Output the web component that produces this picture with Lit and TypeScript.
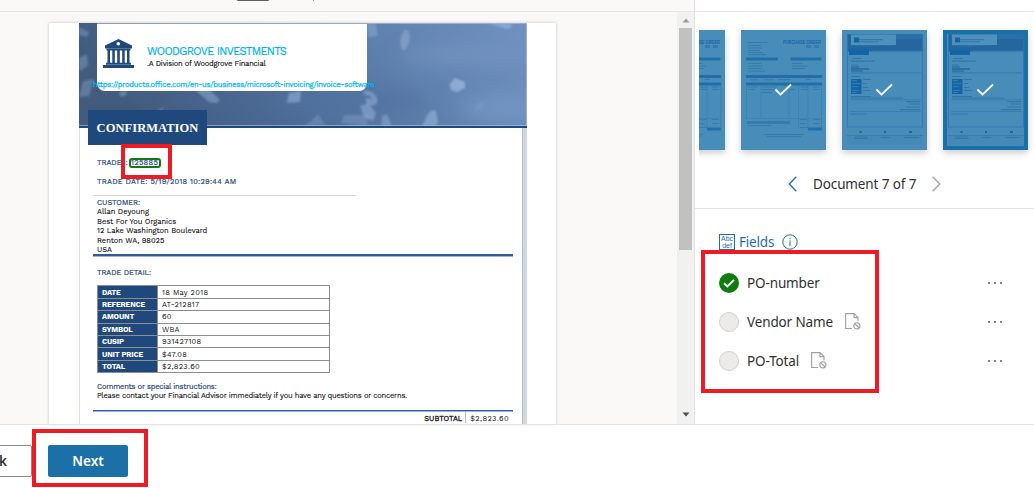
import { LitElement, html, svg, css } from "lit";
import { customElement, property } from "lit/decorators.js";

const bankIcon = html`<svg class="bank" width="31" height="29" viewBox="0 0 31 29">
  <g fill="#1f497d">
    <path d="M15.5 0 L29 6.6 V9.6 H2 V6.6 Z" />
    <path d="M3.5 9.6H27.5V11.4H3.5Z M4.5 11H7V24H4.5Z M9.3 11H11.8V24H9.3Z M14.2 11H16.8V24H14.2Z M19.2 11H21.7V24H19.2Z M24 11H26.5V24H24Z" />
    <path d="M3 23.7H28V25.8H3Z M0 26H31V29H0Z" />
  </g>
  <circle cx="15.3" cy="4.8" r="1.8" fill="#fff" />
</svg>`;

const bannerArt = html`<svg class="art" width="448" height="103" viewBox="0 0 448 103">
  <defs>
    <linearGradient id="bg" x1="0" y1="0.2" x2="1" y2="0">
      <stop offset="0" stop-color="#435c7e" /><stop offset="0.3" stop-color="#4b6a95" />
      <stop offset="0.65" stop-color="#5f81ae" /><stop offset="1" stop-color="#7092c0" />
    </linearGradient>
    <filter id="soft"><feGaussianBlur stdDeviation="0.8" /></filter>
    <filter id="haze" x="-50%" y="-50%" width="200%" height="200%"><feGaussianBlur stdDeviation="9" /></filter>
  </defs>
  <rect width="448" height="103" fill="url(#bg)" />
  <g filter="url(#haze)">
    <ellipse cx="390" cy="32" rx="70" ry="9" fill="#7898c4" opacity=".6" />
    <ellipse cx="430" cy="85" rx="50" ry="14" fill="#7b9cca" opacity=".6" />
    <ellipse cx="270" cy="78" rx="80" ry="14" fill="#4f719f" opacity=".6" />
  </g>
  <g filter="url(#soft)" fill="#8daad4">
    <path d="M0 4 10 9 8 14 0 12Z" opacity=".4" />
    <path d="M0 35 8 31 9 42 2 48 0 46Z" opacity=".4" />
    <path d="M4 58 15 56 10 73 0 74Z" opacity=".38" />
    <path d="M40 69 48 68 47 72 42 74Z" opacity=".5" />
    <path d="M117 68 130 66 141 77 138 80 130 79Z" opacity=".55" />
    <path d="M210 70 222 68 221 79 208 80Z" opacity=".65" />
    <path d="M78 89 84 84 83 91 77 93Z" opacity=".5" />
    <path d="M232 98 239 91 246 102 225 103Z" opacity=".35" />
    <path d="M285 68Q294 66 298 75 300 82 292 83 285 80 287 75L293 76Q290 71 285 72Z" opacity=".6" />
    <path d="M288 0H297L299 13 289 14Z" opacity=".5" />
    <ellipse cx="326" cy="17" rx="4.5" ry="10" transform="rotate(10 326 17)" opacity=".6" />
    <path d="M371 61 376 55 386 59V65L378 69 372 67Z" />
    <path d="M265 92 290 92 288 103 262 100Z" opacity=".35" />
    <path d="M281 83 289 80 297 90 294 98 285 94Z" opacity=".6" />
    <path d="M303 93 308 91 313 103H302Z" opacity=".55" />
    <path d="M348 93Q352 85 357 88L359 100 356 103H343Z" opacity=".75" />
    <path d="M409 0 432 0 433 4 428 6Z" opacity=".9" />
    <path d="M396 82 406 77 403 86 396 90Z" opacity=".2" />
  </g>
  <path d="M0 102.5H448M447.5 0V103M18 .5H448" stroke="#b9c8dd" stroke-width="1" opacity=".6" />
</svg>`;

const lines = (list: number[][], color: string, opacity: number) =>
  list.map(([x, y, w, h]) => svg`<rect x=${x} y=${y} width=${w} height=${h} fill=${color} opacity=${opacity} />`);

const orderArt = html`<svg width="85" height="120" viewBox="0 0 85 120">
  ${svg`${lines([[5, 27.5, 32, 3], [49.5, 27.5, 31, 3], [5, 45, 76, 3], [5, 52.5, 76, 3], [67, 97.5, 14, 3]], "#1465a3", 0.75)}
  ${lines([[6, 12, 21, 1], [7, 15, 13, 1], [7, 17.5, 14, 1], [7, 20, 12, 1], [7, 22, 15, 1], [7, 24, 18, 1.2], [7, 33, 13, 1], [7, 35.5, 15, 1], [7, 38, 14, 1], [7, 40.5, 17, 1], [51, 33, 11, 1], [51, 35.5, 15, 1], [51, 38, 13, 1], [65, 15, 5, 3], [73, 15, 5, 3], [9, 49.3, 8, 1], [23, 49.3, 10, 1], [37, 49, 13, 1.2], [65, 49, 5, 1], [7, 56.5, 10, 1], [7, 59, 7, 1], [21, 56.5, 15, 1], [21, 59, 12, 1], [21, 62, 10, 1], [49, 59, 5, 1], [60, 56.5, 7, 1], [60, 59, 7, 1], [72, 56.5, 7, 1], [72, 59, 7, 1], [6, 91, 43, 3], [7, 95, 23, 1], [59, 89, 7, 1], [59, 93, 6, 1], [59, 97, 8, 1], [72, 89, 7, 1], [72, 93, 7, 1], [23, 104, 40, 1], [26, 106, 34, 1]], "#175f95", 0.38)}`}
  <path d="M5.5 55V88.500H80.500V55M20 55V88M48 55V88M57.500 55V99M67 55V99M80.500 88V99" stroke="#3379ae" stroke-width=".5" fill="none" />
  <text x="42" y="14" class="order" textLength="38" lengthAdjust="spacingAndGlyphs">PURCHASE ORDER</text>
</svg>`;

const confirmArt = html`<svg width="85" height="120" viewBox="0 0 85 120">
  <rect x="5.500" y="4.500" width="75" height="92.500" fill="none" stroke="#2f7bb1" />
  <rect x="5.500" y="4" width="75.500" height="17.500" fill="#2a6fa6" />
  <path d="M6 5H9V16H12L30 17V21H6Z M30 16H48L55 9H80V20H30Z" fill="#1d5e94" opacity=".5" />
  <rect x="9" y="4.500" width="45" height="10.500" fill="#4e91bd" />
  <rect x="12" y="7.500" width="5" height="5" fill="#1762a1" />
  <rect x="7" y="19" width="20" height="6" fill="#1465a5" />
  <rect x="9" y="49" width="10.500" height="15" fill="#1465a3" />
  ${svg`${lines([[17, 9, 24, 1.2], [17, 11.300, 20, 1], [9, 22, 16, 1], [10, 28, 10, 1], [9, 30.500, 24, 1.2], [9, 34.500, 7, 1], [9, 42.500, 70, 0.8], [9, 46, 9, 1], [9, 66, 20, 1], [9, 67.500, 52, 1], [64, 71, 14, 1.200], [67, 73.500, 11, 1], [64, 76.500, 14, 1], [58, 79, 20, 1.200], [8, 83.500, 17, 1], [8, 69.500, 71, 0.6], [8, 81, 71, 0.6], [21, 49, 8, 1], [21, 53, 4, 1], [21, 57, 5, 1], [21, 60, 8, 1], [5, 105, 76, 0.7], [12, 106.500, 13, 1], [12, 108, 14, 1], [39, 107, 9, 1], [62, 107, 15, 1]], "#175f95", 0.5)}
  ${lines([[9, 36.500, 8, 1], [9, 38.300, 18, 1.300], [9, 40.500, 12, 1], [17.500, 101, 2, 2], [42, 101, 2, 2], [67, 101, 3, 2]], "#0d4f82", 0.65)}
  ${lines([[10, 50.500, 5, 0.6], [10, 53.500, 8, 0.6], [10, 56.500, 6, 0.6], [10, 60, 7, 0.6], [10, 62, 5, 0.6]], "#5a9bc7", 0.8)}`}
  <rect x="5.500" y="105" width="75.500" height="10" fill="#377fb4" opacity=".25" />
</svg>`;

@customElement("doc-thumb")
export class DocThumb extends LitElement {
  @property() kind = "order";
  @property({ type: Boolean, reflect: true }) selected = false;

  static styles = css`
    :host { display: grid; flex: none; width: 85px; height: 120px; background: #488dba; box-shadow: 0 3px 7px rgba(0, 0, 0, 0.2); overflow: hidden; }
    svg { grid-area: 1 / 1; display: block; }
    .check { place-self: center; }
    .frame { grid-area: 1 / 1; box-sizing: border-box; z-index: 1; }
    :host([selected]) .frame { border: 4px solid #1b70a8; }
    .order { font: bold 4.500px "Liberation Sans", sans-serif; fill: #1465a3; }
  `;

  render() {
    return html`${this.kind === "order" ? orderArt : confirmArt}
      <svg class="check" width="19" height="14" viewBox="0 0 19 14"><path d="M1.500 6.500 6.500 11.600 17 1.500" fill="none" stroke="#fff" stroke-width="1.800" /></svg>
      <div class="frame"></div>`;
  }
}

@customElement("field-row")
export class FieldRow extends LitElement {
  @property() state = "found";

  static styles = css`
    :host { display: flex; align-items: center; height: 39px; font-size: 13.500px; letter-spacing: -0.130px; color: #323130; }
    .mark { flex: none; box-sizing: border-box; width: 20px; height: 20px; border-radius: 50%; background: #edebe9; border: 1.500px solid #d2d0ce; }
    .found { background: #107c10; border: 0; }
    .mark svg { display: block; }
    .label { margin-left: 8px; white-space: pre; }
    .missing { margin-left: 12px; }
    .more { margin-left: auto; }
  `;

  render() {
    const found = this.state === "found";
    return html`<div class="mark ${found ? "found" : ""}">
        ${found ? html`<svg width="20" height="20" viewBox="0 0 20 20"><path d="M5 10.200 8.400 13.500 15 6.900" fill="none" stroke="#fff" stroke-width="1.900" /></svg>` : ""}
      </div>
      <span class="label"><slot></slot></span>
      ${found ? "" : html`<svg class="missing" width="16" height="17" viewBox="0 0 16 17" fill="none" stroke="#a19f9d" stroke-width="1.100">
        <path d="M7 15.500H.6V.6H9L13 4.600V8.500M9 .6V4.600H13" /><circle cx="11.900" cy="12.800" r="3.100" /><path d="M9.700 10.600 14.100 15" />
      </svg>`}
      <svg class="more" width="16" height="4" viewBox="0 0 16 4" fill="#7c8592"><path d="M1 1H3V3H1Z M7 1H9V3H7Z M13 1H15V3H13Z" /></svg>`;
  }
}

@customElement("trade-document")
export class TradeDocument extends LitElement {
  static styles = css`
    :host { display: block; box-sizing: border-box; width: 507px; height: 401px; padding-left: 30px; background: #fff; overflow: hidden; box-shadow: 0 0 3px rgba(0, 0, 0, 0.22); font: 7.500px/9.500px "Work Sans", "Liberation Sans", Arial, sans-serif; font-variant-numeric: lining-nums; color: #111; }
    .sheet { width: 448px; }
    .banner { display: grid; height: 103px; border-bottom: 2px solid #1f497d; }
    .art { grid-area: 1 / 1; display: block; }
    .card { grid-area: 1 / 1; position: relative; margin: 1px 0 0 18px; width: 270px; height: 67px; background: #fff; border-radius: 0 0 8px 8px; display: flex; box-sizing: border-box; padding: 15px 0 0 6px; align-items: flex-start; white-space: nowrap; }
    .names { margin: 5.500px 0 0 13px; }
    .company { color: #00b0f0; font-size: 11px; line-height: 14px; letter-spacing: -0.640px; -webkit-text-stroke: 0.200px #00b0f0; }
    .division { line-height: 9px; letter-spacing: -0.200px; -webkit-text-stroke: 0.150px #111; }
    .link { position: absolute; left: -4px; top: 57px; color: #00b5f5; font-size: 7.500px; line-height: 8px; letter-spacing: -0.200px; -webkit-text-stroke: 0.250px #00b5f5; }
    .body { position: relative; box-sizing: border-box; height: 298px; border-right: 4px solid #d0d7e0; border-left: 1px solid #dde1ee; box-shadow: inset -1px 0 #aebfd8; padding: 0 0 0 13px; }
    .title { position: absolute; left: 8px; top: -18px; width: 119px; height: 35px; background: #1f497d; color: #fff; font: bold 12.500px/36px "Liberation Serif", serif; text-align: center; letter-spacing: 0.050px; }
    .blue { color: #1f497d; -webkit-text-stroke: 0.200px #1f497d; }
    .inset { padding-left: 4px; }
    .trade { display: flex; padding-top: 30px; height: 10px; align-items: center; letter-spacing: -0.050px; }
    .tag { box-sizing: border-box; width: 32px; height: 10px; border: 2px solid #107c10; border-radius: 3px; line-height: 6px; margin-left: 1px; letter-spacing: 0.350px; display: flex; justify-content: center; }
    .gap { width: 4px; }
    .date { margin-top: 9px; padding-bottom: 8.500px; letter-spacing: 0.220px; }
    .customer { border-top: 1px solid #cfd1d5; width: 259px; padding-top: 2px; letter-spacing: -0.020px; line-height: 9.400px; -webkit-text-stroke: 0.120px #111; }
    .rule { height: 1.500px; background: #2f5c95; width: 420px; border-bottom: 0.500px solid #9db4d4; }
    .detail { margin: 11px 0 8px; letter-spacing: -0.080px; }
    table { border-collapse: collapse; margin-left: 4px; width: 233px; table-layout: fixed; letter-spacing: 0.270px; }
    th, td { border: 1px solid #8b8d91; height: 12.400px; box-sizing: border-box; padding: 0 4px; text-align: left; line-height: 9px; }
    th { width: 60px; background: #1f497d; color: #fff; letter-spacing: -0.160px; }
    .notes { margin: 8.500px 0 9px; white-space: nowrap; letter-spacing: -0.200px; -webkit-text-stroke: 0.120px #111; }
    .notes .blue { letter-spacing: -0.210px; }
    .sub { display: flex; justify-content: flex-end; width: 420px; }
    .sub b { padding: 1.500px 3px 0 0; font-weight: normal; -webkit-text-stroke: 0.300px #111; letter-spacing: 0; }
    .sub span { border-left: 1px solid #bbb; padding: 1.500px 4px 0; letter-spacing: 0.350px; }
    .mark { position: absolute; left: 41px; top: 16px; box-sizing: border-box; width: 51px; height: 35px; border: 4px solid #ed1c24; }
  `;

  rows = [["DATE", "18 May 2018"], ["REFERENCE", "AT-212817"], ["AMOUNT", "60"], ["SYMBOL", "WBA"], ["CUSIP", "931427108"], ["UNIT PRICE", "$47.08"], ["TOTAL", "$2,823.60"]];

  render() {
    return html`<div class="sheet">
      <div class="banner">${bannerArt}
        <div class="card">${bankIcon}
          <div class="names"><div class="company">WOODGROVE INVESTMENTS</div><div class="division">.A Division of Woodgrove Financial</div></div>
          <div class="link">https://products.office.com/en-us/business/microsoft-invoicing/invoice-software</div>
        </div>
      </div>
      <div class="body">
        <div class="title">CONFIRMATION</div>
        <div class="inset trade blue">TRADE<div class="gap"></div>:<div class="tag">125885</div></div>
        <div class="inset date blue">TRADE DATE: 5/19/2018 10:29:44 AM</div>
        <div class="inset customer"><div class="blue">CUSTOMER:</div>
          ${["Allan Deyoung", "Best For You Organics", "12 Lake Washington Boulevard", "Renton WA, 98025", "USA"].map((t) => html`<div>${t}</div>`)}
        </div>
        <div class="rule"></div>
        <div class="inset detail blue">TRADE DETAIL:</div>
        <table>${this.rows.map(([k, v]) => html`<tr><th>${k}</th><td>${v}</td></tr>`)}</table>
        <div class="inset notes"><div class="blue">Comments or special instructions:</div><div>Please contact your Financial Advisor immediately if you have any questions or concerns.</div></div>
        <div class="rule"></div>
        <div class="sub"><b>SUBTOTAL</b><span>$2,823.60</span></div>
        <div class="mark"></div>
      </div>
    </div>`;
  }
}

@customElement("app-root")
export class AppRoot extends LitElement {
  static styles = css`
    :host { display: grid; grid-template-rows: 424px 64px; position: relative; width: 1034px; height: 488px; overflow: hidden; background: #fff; font-family: "Noto Sans", "Segoe UI", sans-serif; color: #323130; }
    .main { display: grid; grid-template-columns: 694px 340px; min-height: 0; }
    .viewer { background: #faf9f8; display: grid; grid-template-rows: 12px 412px; }
    .toolbar { display: flex; border-bottom: 1px solid #e5e4e3; }
    .tab { margin-left: 237px; width: 32px; height: 1px; background: #605e5c; border-radius: 0 0 2px 2px; }
    .tick { margin-left: 44px; width: 1px; height: 1px; background: #888; }
    .stage { display: flex; justify-content: space-between; padding-left: 49px; }
    trade-document { margin-top: 11px; }
    .scroll { width: 17px; height: 412px; background: #f1f1f1; display: flex; flex-direction: column; align-items: center; justify-content: space-between; box-sizing: border-box; padding: 6px 0 7px; }
    .thumb { width: 13px; height: 222px; background: #c1c1c1; margin: 5px 0 auto; }
    .panel { border-left: 1px solid #e5e4e3; display: grid; grid-template-columns: minmax(0, 1fr); grid-template-rows: 12px 197px 215px; }
    .line { border-bottom: 1px solid #e5e4e3; }
    .docs { border-bottom: 1px solid #e5e4e3; padding-left: 4px; }
    .strip { display: flex; justify-content: flex-end; gap: 16px; overflow: hidden; padding: 18px 6px 14px 0; }
    .pager { display: flex; align-items: center; margin: 11px 0 0 89px; font-size: 13.500px; }
    .pager span { margin: 0 16px; letter-spacing: -0.120px; white-space: nowrap; }
    .fields { padding: 21px 31px 0 24px; }
    .head { display: flex; align-items: center; height: 23px; color: #1b6fa8; font-size: 13.500px; }
    .head span { margin: 0 8px 0 4px; letter-spacing: -0.200px; }
    .abc { box-sizing: border-box; width: 16px; height: 16px; border: 1px solid #1b6fa8; font: 7px/7px "Liberation Sans", sans-serif; text-align: center; }
    .rows { padding-top: 10px; }
    .fieldmark, .nextmark { position: absolute; box-sizing: border-box; border: 4px solid #ed1c24; }
    .fieldmark { left: 701px; top: 250px; width: 178px; height: 143px; }
    .nextmark { left: 32px; top: 429px; width: 116px; height: 58px; }
    .footer { border-top: 1px solid #e5e4e3; padding-top: 20px; display: flex; gap: 16px; }
    .btn { box-sizing: border-box; height: 32px; border-radius: 2px; font-weight: 600; font-size: 13.500px; line-height: 32px; text-align: center; }
    .back { width: 80px; margin-left: -48px; border: 1px solid #8a8886; line-height: 30px; text-align: right; padding-right: 24px; }
    .next { width: 80px; background: #1b70a8; color: #fff; }
  `;

  render() {
    return html`<div class="main">
        <div class="viewer">
          <div class="toolbar"><div class="tab"></div><div class="tick"></div></div>
          <div class="stage"><trade-document></trade-document>
            <div class="scroll">
              <svg width="8" height="5" viewBox="0 0 8 5"><path d="M4 .5 7.500 4.500H.5Z" fill="#9b9b9b" /></svg>
              <div class="thumb"></div>
              <svg width="8" height="5" viewBox="0 0 8 5"><path d="M4 4.500 7.500 .5H.5Z" fill="#505050" /></svg>
            </div>
          </div>
        </div>
        <div class="panel">
          <div class="line"></div>
          <div class="docs">
            <div class="strip"><doc-thumb kind="order"></doc-thumb><doc-thumb kind="order"></doc-thumb><doc-thumb kind="confirm"></doc-thumb><doc-thumb kind="confirm" selected></doc-thumb></div>
            <div class="pager">
              <svg width="9" height="16" viewBox="0 0 9 16"><path d="M8.300 .8 1.200 8 8.300 15.200" fill="none" stroke="#1b6fa8" stroke-width="1.300" /></svg>
              <span>Document 7 of 7</span>
              <svg width="9" height="16" viewBox="0 0 9 16"><path d="M.7 .8 7.800 8 .7 15.200" fill="none" stroke="#a19f9d" stroke-width="1.300" /></svg>
            </div>
          </div>
          <div class="fields">
            <div class="head"><div class="abc">Abc<br />def</div><span>Fields</span>
              <svg width="16" height="16" viewBox="0 0 16 16" fill="none" stroke="#1b6fa8"><circle cx="8" cy="8" r="7.200" /><path d="M8 6.500V12M8 3.800V5.200" /></svg>
            </div>
            <div class="rows"><field-row>PO-number</field-row><field-row state="none">Vendor Name</field-row><field-row state="none">PO-Total</field-row></div>
          </div>
        </div>
      </div>
      <div class="footer"><div class="btn back">Back</div><div class="btn next">Next</div></div>
      <div class="fieldmark"></div><div class="nextmark"></div>`;
  }
}
